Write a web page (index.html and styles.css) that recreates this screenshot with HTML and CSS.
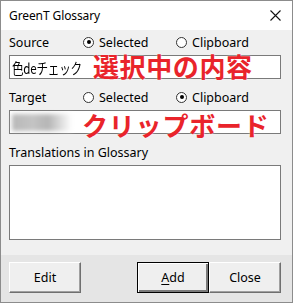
FILE: index.html
```html
<!DOCTYPE html>
<html>
<head>
  <meta charset="UTF-8">
  <title>GreenT Glossary</title>
  <link rel="stylesheet" href="styles.css">
</head>
<body>
  <div class="window">
    <div class="titlebar">
      <span class="title">GreenT Glossary</span>
      <svg class="close-icon" width="11" height="11" viewBox="0 0 11 11">
        <path d="M0.5 0.5 L10.5 10.5 M10.5 0.5 L0.5 10.5" stroke="#111" stroke-width="1.1" fill="none"/>
      </svg>
    </div>

    <div class="content">
      <div class="row">
        <span class="label">Source</span>
        <label class="radio"><span class="dot checked"></span>Selected</label>
        <label class="radio"><span class="dot"></span>Clipboard</label>
      </div>
      <div class="field">
        <span class="value">色deチェック</span>
        <span class="note note-source">選択中の内容</span>
      </div>

      <div class="row">
        <span class="label">Target</span>
        <label class="radio"><span class="dot"></span>Selected</label>
        <label class="radio"><span class="dot checked"></span>Clipboard</label>
      </div>
      <div class="field">
        <span class="blurred"></span>
        <span class="note note-target">クリップボード</span>
      </div>

      <div class="row">
        <span class="label wide">Translations in Glossary</span>
      </div>
      <div class="list"></div>
    </div>

    <div class="footer">
      <button class="btn">Edit</button>
      <div class="spacer"></div>
      <button class="btn default"><u>A</u>dd</button>
      <button class="btn">Close</button>
    </div>
  </div>
</body>
</html>
```

FILE: styles.css
```css
body {
  margin: 0;
  background: #ffffff;
  font-family: "Noto Sans", "Noto Sans CJK JP", sans-serif;
  color: #000;
}
.window {
  width: 293px;
  height: 303px;
  box-sizing: border-box;
  border: 1px solid #8c8c8c;
  background: #f0f0f0;
  display: flex;
  flex-direction: column;
}
.titlebar {
  height: 29px;
  background: #ffffff;
  display: flex;
  align-items: center;
  justify-content: space-between;
  padding: 0 11px 0 8px;
  flex-shrink: 0;
}
.title {
  font-size: 12px;
  color: #000;
  letter-spacing: -0.1px;
}
.close-icon {
  display: block;
}
.content {
  flex: 1;
  padding: 4px 11px 0 8px;
  display: flex;
  flex-direction: column;
}
.row {
  height: 16px;
  display: flex;
  align-items: center;
  font-size: 12.5px;
}
.label {
  width: 74px;
  flex-shrink: 0;
}
.label.wide {
  width: auto;
}
.radio {
  width: 93px;
  display: flex;
  align-items: center;
}
.dot {
  width: 11px;
  height: 11px;
  box-sizing: border-box;
  border: 1px solid #333;
  border-radius: 50%;
  background: #fff;
  margin-right: 5px;
  position: relative;
}
.dot.checked::after {
  content: "";
  position: absolute;
  left: 2.5px;
  top: 2.5px;
  width: 4px;
  height: 4px;
  border-radius: 50%;
  background: #000;
}
.field {
  position: relative;
  height: 24px;
  box-sizing: border-box;
  border: 1px solid #7a7a7a;
  background: #fff;
  margin-top: 5px;
  margin-bottom: 10px;
  display: flex;
  align-items: center;
  padding-left: 2px;
}
.value {
  display: inline-block;
  font-family: "Noto Sans CJK JP", sans-serif;
  font-size: 14.5px;
  letter-spacing: -0.3px;
  transform: scaleX(0.8);
  transform-origin: left center;
  white-space: nowrap;
}
.blurred {
  width: 60px;
  height: 17px;
  background: linear-gradient(90deg, #b8b8b8 0%, #c4c4c4 35%, #b5b5b5 60%, #fff 100%);
  filter: blur(2px);
}
.note {
  position: absolute;
  font-family: "Noto Sans CJK JP", sans-serif;
  font-weight: 700;
  font-size: 26px;
  color: #e9242b;
  line-height: 1;
  text-shadow: 0 0 2px rgba(255, 255, 255, 0.9);
  white-space: nowrap;
}
.note-source {
  left: 83px;
  top: -3px;
  letter-spacing: 0.6px;
}
.note-target {
  left: 72px;
  top: 1px;
  letter-spacing: 0.8px;
}
.list {
  height: 75px;
  box-sizing: border-box;
  border: 1px solid #7a7a7a;
  background: #fff;
  margin-top: 5px;
}
.footer {
  height: 47px;
  flex-shrink: 0;
  background: #e5e5e5;
  display: flex;
  align-items: flex-start;
  padding: 7px 11px 0 8px;
  box-sizing: border-box;
}
.spacer {
  flex: 1;
}
.btn {
  width: 72px;
  height: 31px;
  box-sizing: border-box;
  background: #efefef;
  border: 1px solid;
  border-color: #ffffff #6f6f6f #6f6f6f #ffffff;
  box-shadow: inset -1px -1px 0 #a0a0a0;
  font-family: "Noto Sans", sans-serif;
  font-size: 12.5px;
  color: #000;
  padding: 0;
}
.btn u {
  text-underline-offset: 2px;
}
.btn.default {
  border: 1px solid #000;
  box-shadow: inset 1px 1px 0 #fff, inset -2px -2px 0 #7a7a7a;
}
```
